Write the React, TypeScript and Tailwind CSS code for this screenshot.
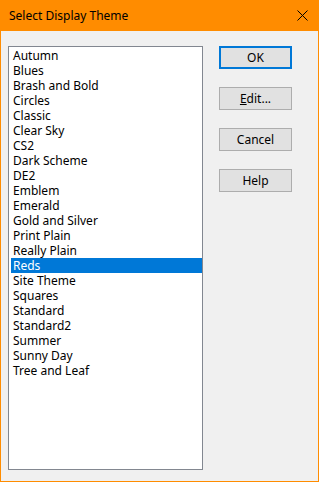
const THEMES = [
  "Autumn",
  "Blues",
  "Brash and Bold",
  "Circles",
  "Classic",
  "Clear Sky",
  "CS2",
  "Dark Scheme",
  "DE2",
  "Emblem",
  "Emerald",
  "Gold and Silver",
  "Print Plain",
  "Really Plain",
  "Reds",
  "Site Theme",
  "Squares",
  "Standard",
  "Standard2",
  "Summer",
  "Sunny Day",
  "Tree and Leaf",
];

function DlgButton({ label, focused }: { label: React.ReactNode; focused?: boolean }) {
  return (
    <button
      className={
        "w-[73px] h-[23px] flex items-center justify-center bg-[#e1e1e1] text-[12px] text-black leading-none " +
        (focused ? "border-2 border-[#0078d7]" : "border border-[#adadad]")
      }
    >
      {label}
    </button>
  );
}

export default function App() {
  const selected = "Reds";
  return (
    <div
      className="w-[319px] h-[482px] flex flex-col bg-[#ff8c00]"
      style={{ fontFamily: '"Segoe UI", "Noto Sans", "Open Sans", sans-serif' }}
    >
      <div className="h-[31px] flex items-center justify-between pl-[9px] pr-[10px] shrink-0">
        <span className="text-[12px] text-black">Select Display Theme</span>
        <svg width="11" height="11" viewBox="0 0 11 11" className="mr-[1px]">
          <path d="M0.5 0.5 L10.5 10.5 M10.5 0.5 L0.5 10.5" stroke="#000" strokeWidth="1" />
        </svg>
      </div>
      <div className="flex-1 mx-[1px] mb-[1px] bg-[#f0f0f0] flex pt-[15px] pl-[7px]">
        <div className="w-[195px] h-[424px] bg-white border border-[#828790] pt-[1px] pl-[2px]">
          {THEMES.map((t) => (
            <div
              key={t}
              className={
                "h-[15px] pl-[2px] text-[12px] leading-[15px] whitespace-nowrap overflow-hidden " +
                (t === selected ? "bg-[#0078d7] text-white" : "text-black")
              }
            >
              {t}
            </div>
          ))}
        </div>
        <div className="ml-[16px] flex flex-col gap-[18px]">
          <DlgButton label="OK" focused />
          <DlgButton
            label={
              <span>
                <span className="underline">E</span>dit...
              </span>
            }
          />
          <DlgButton label="Cancel" />
          <DlgButton label="Help" />
        </div>
      </div>
    </div>
  );
}
